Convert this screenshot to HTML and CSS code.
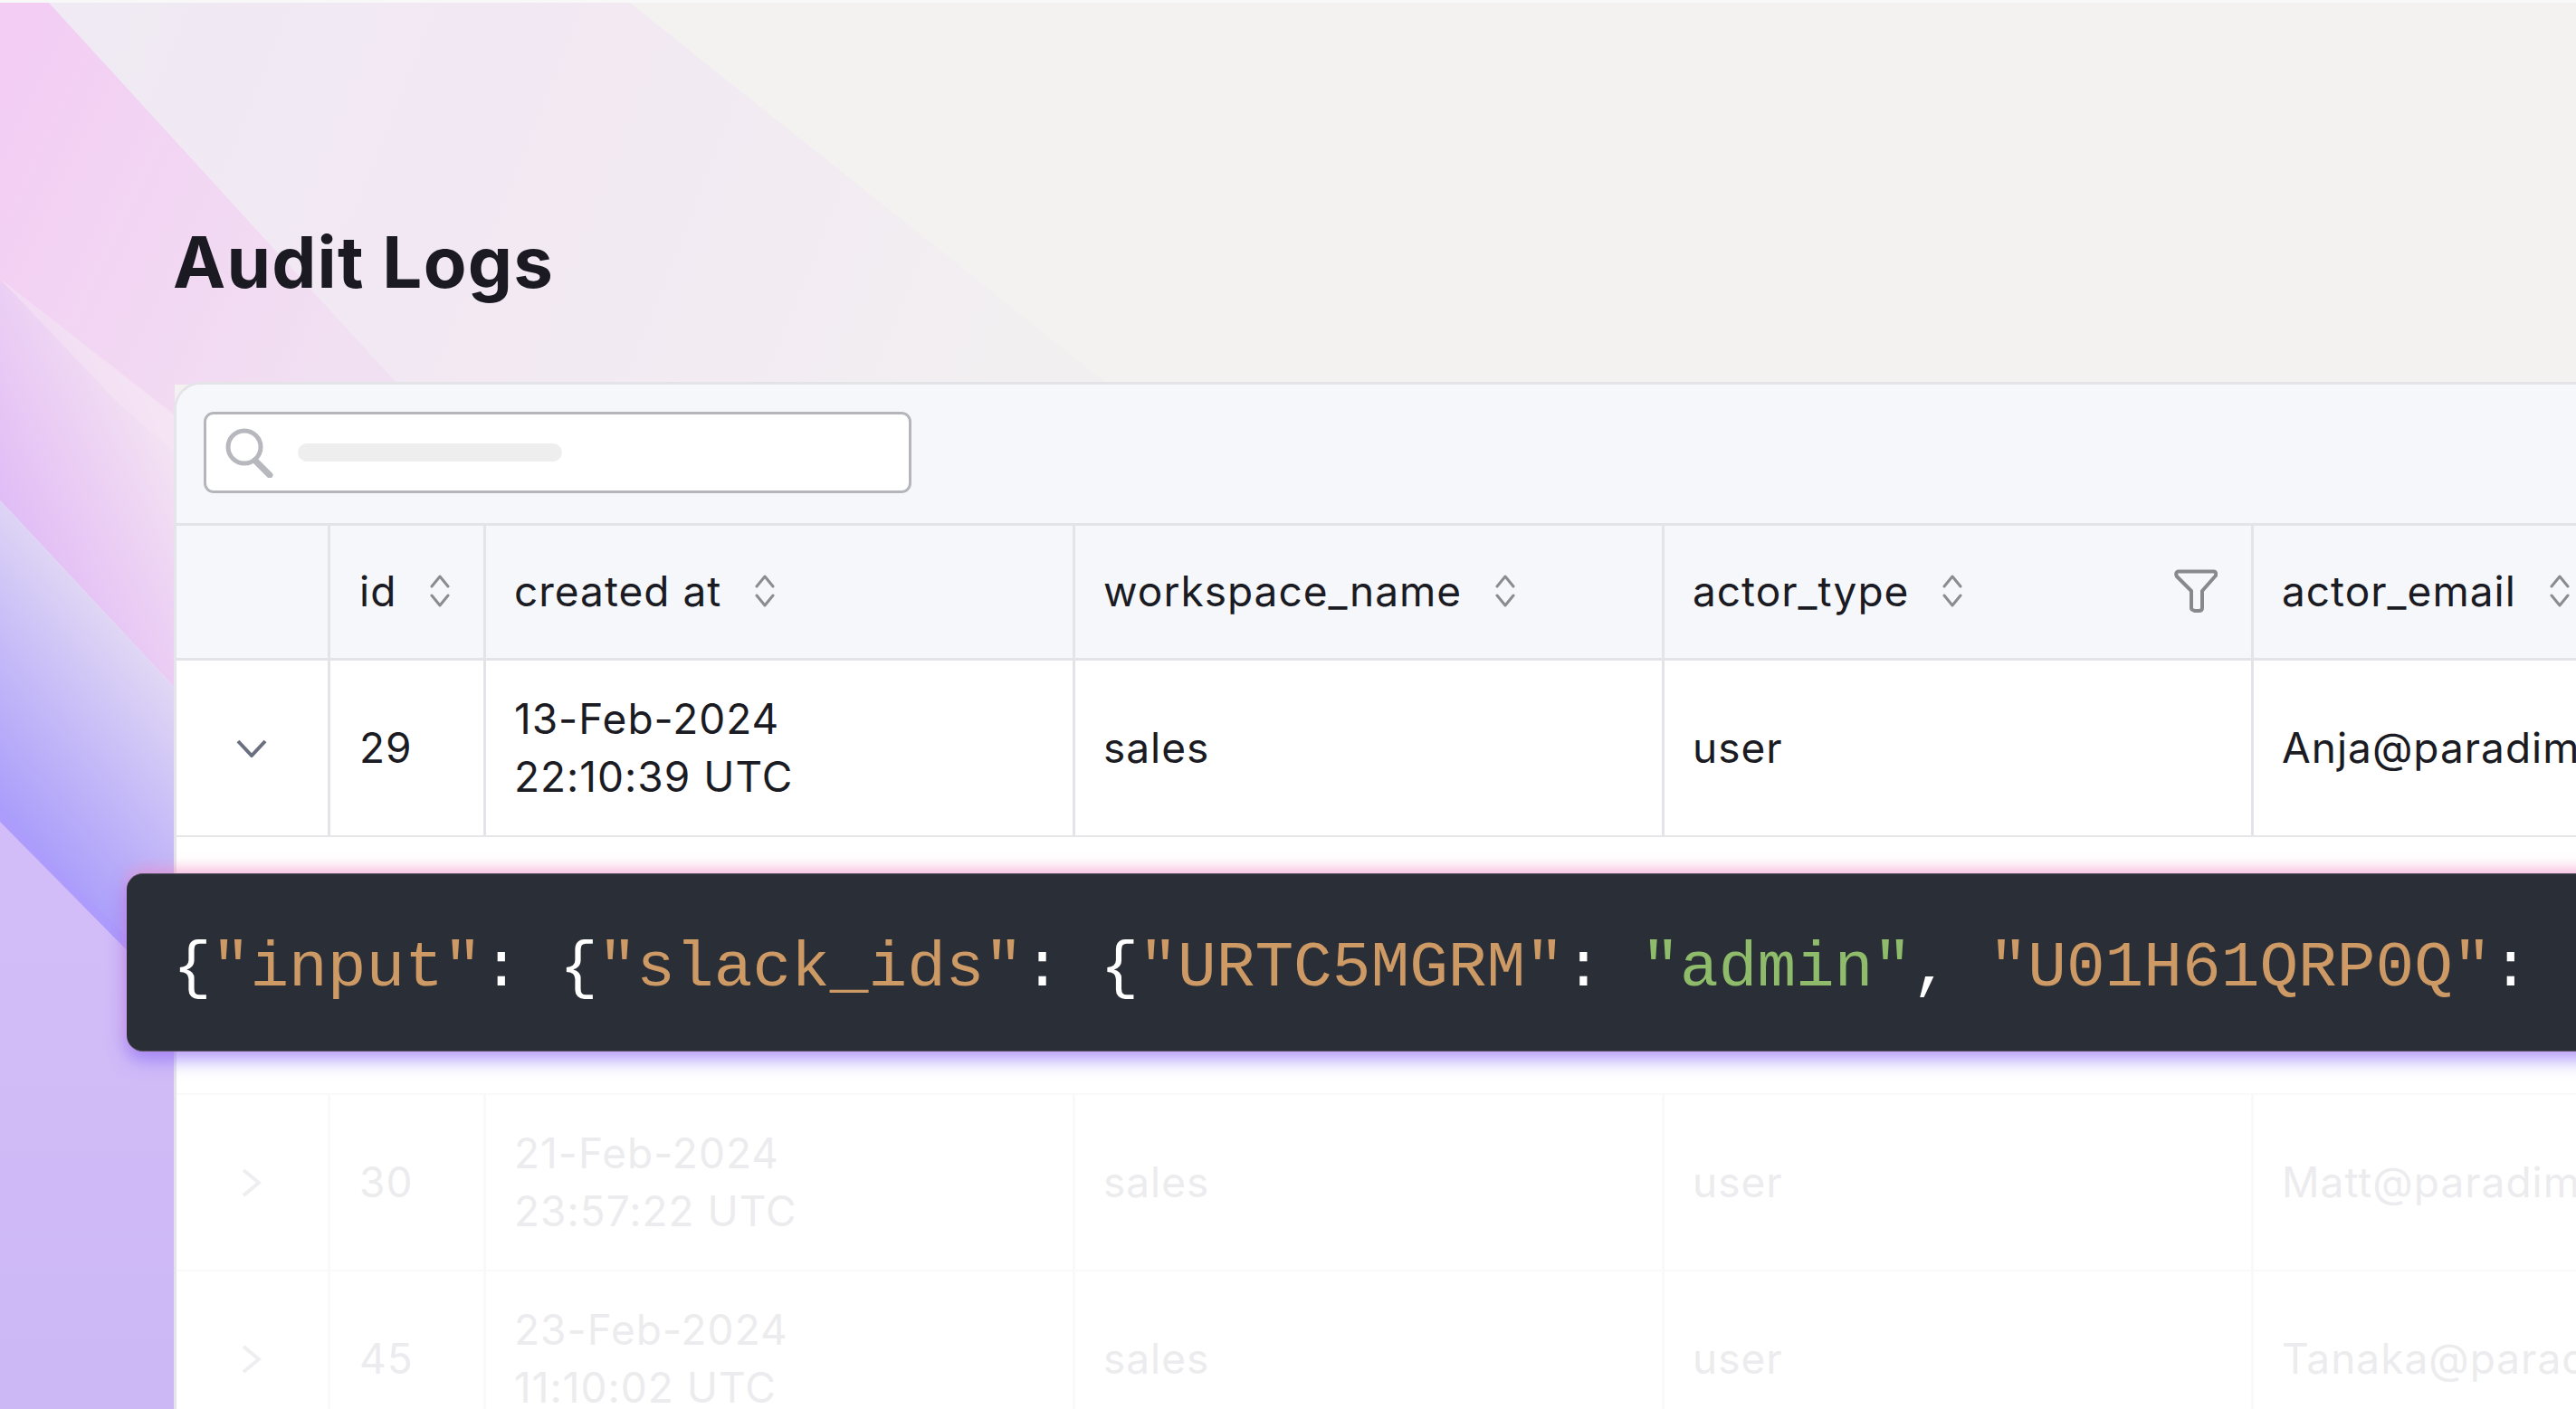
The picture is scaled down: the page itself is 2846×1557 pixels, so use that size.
FILE: index.html
```html
<!DOCTYPE html>
<html lang="en">
<head>
<meta charset="utf-8">
<title>Audit Logs</title>
<link rel="stylesheet" href="styles.css">
</head>
<body>
<svg class="backdrop" viewBox="0 0 2846 1557" preserveAspectRatio="none" aria-hidden="true">
  <defs>
    <linearGradient id="gBand" gradientUnits="userSpaceOnUse" x1="60" y1="0" x2="1100" y2="420">
      <stop offset="0" stop-color="#efeaf3"/>
      <stop offset=".45" stop-color="#f2e8f3"/>
      <stop offset="1" stop-color="#f2eff1"/>
    </linearGradient>
    <linearGradient id="gPink" gradientUnits="userSpaceOnUse" x1="0" y1="100" x2="420" y2="300">
      <stop offset="0" stop-color="#f3cdf4"/>
      <stop offset="1" stop-color="#f1e0f2"/>
    </linearGradient>
    <linearGradient id="gMauve" gradientUnits="userSpaceOnUse" x1="190" y1="470" x2="0" y2="560">
      <stop offset="0" stop-color="#f4e5f3"/>
      <stop offset=".55" stop-color="#ebcdf4"/>
      <stop offset="1" stop-color="#e0bcf6"/>
    </linearGradient>
    <linearGradient id="gBlue" gradientUnits="userSpaceOnUse" x1="190" y1="740" x2="0" y2="900">
      <stop offset="0" stop-color="#e3daf4"/>
      <stop offset="1" stop-color="#a99cfb"/>
    </linearGradient>
    <linearGradient id="gLilac" gradientUnits="userSpaceOnUse" x1="0" y1="1000" x2="0" y2="1557">
      <stop offset="0" stop-color="#d2bdf8"/>
      <stop offset="1" stop-color="#ccb8f5"/>
    </linearGradient>
  </defs>
  <polygon points="54,3 696,3 1225,425 440,425" fill="url(#gBand)"/>
  <polygon points="0,3 54,3 440,425 193,425 193,462 0,312" fill="url(#gPink)"/>
  <polygon points="0,310 193,460 193,760 0,553" fill="url(#gMauve)"/>
  <polygon class="sheen" points="0,308 193,458 193,500 130,445" fill="#f6e6f4"/>
  <polygon points="0,553 193,760 193,1110 0,907" fill="url(#gBlue)"/>
  <polygon points="0,907 150,1058 193,1110 193,1557 0,1557" fill="url(#gLilac)"/>
  <polygon points="0,897 150,1045 150,1060 0,908" fill="#ad9cfc"/>
</svg>

<main class="page">
  <h1 class="title">Audit Logs</h1>

  <section class="card">
    <div class="toolbar">
      <div class="search">
        <svg class="search-icon" viewBox="0 0 56 56" aria-hidden="true">
          <circle cx="22" cy="22" r="18" class="search-ring"/>
          <path d="M34 37 L50 53" class="search-handle"/>
        </svg>
        <span class="search-placeholder"></span>
      </div>
    </div>

    <div class="row head">
      <div class="cell c-toggle"></div>
      <div class="cell c-id"><span>id</span>
        <svg class="sort" viewBox="0 0 22 36" aria-hidden="true"><path d="M2 13 L11 2 L20 13 M2 23 L11 34 L20 23"/></svg>
      </div>
      <div class="cell c-wide"><span>created at</span>
        <svg class="sort" viewBox="0 0 22 36" aria-hidden="true"><path d="M2 13 L11 2 L20 13 M2 23 L11 34 L20 23"/></svg>
      </div>
      <div class="cell c-wide"><span>workspace_name</span>
        <svg class="sort" viewBox="0 0 22 36" aria-hidden="true"><path d="M2 13 L11 2 L20 13 M2 23 L11 34 L20 23"/></svg>
      </div>
      <div class="cell c-wide"><span>actor_type</span>
        <svg class="sort" viewBox="0 0 22 36" aria-hidden="true"><path d="M2 13 L11 2 L20 13 M2 23 L11 34 L20 23"/></svg>
        <svg class="filter" viewBox="0 0 48 48" aria-hidden="true"><path d="M4 2.500 H44 Q47 3 46 7 L31 24 V43 Q31 46 27 46 H23 Q19 45 19 43 V24 L3 8 Q1 4 4 2.500 Z"/></svg>
      </div>
      <div class="cell c-wide"><span>actor_email</span>
        <svg class="sort" viewBox="0 0 22 36" aria-hidden="true"><path d="M2 13 L11 2 L20 13 M2 23 L11 34 L20 23"/></svg>
      </div>
    </div>

    <div class="row body">
      <div class="cell c-toggle">
        <svg class="chev-down" viewBox="0 0 34 20" aria-hidden="true"><path d="M2 2 L17 18 L32 2"/></svg>
      </div>
      <div class="cell c-id">29</div>
      <div class="cell c-wide"><span>13-Feb-2024<br>22:10:39 UTC</span></div>
      <div class="cell c-wide">sales</div>
      <div class="cell c-wide">user</div>
      <div class="cell c-wide">Anja@paradime.io</div>
    </div>

    <div class="row-gap"></div>

    <div class="row body faded">
      <div class="cell c-toggle">
        <svg class="chev-right" viewBox="0 0 22 32" aria-hidden="true"><path d="M2 2 L19 16 L2 30"/></svg>
      </div>
      <div class="cell c-id">30</div>
      <div class="cell c-wide"><span>21-Feb-2024<br>23:57:22 UTC</span></div>
      <div class="cell c-wide">sales</div>
      <div class="cell c-wide">user</div>
      <div class="cell c-wide">Matt@paradime.io</div>
    </div>

    <div class="row body faded">
      <div class="cell c-toggle">
        <svg class="chev-right" viewBox="0 0 22 32" aria-hidden="true"><path d="M2 2 L19 16 L2 30"/></svg>
      </div>
      <div class="cell c-id">45</div>
      <div class="cell c-wide"><span>23-Feb-2024<br>11:10:02 UTC</span></div>
      <div class="cell c-wide">sales</div>
      <div class="cell c-wide">user</div>
      <div class="cell c-wide">Tanaka@paradime.io</div>
    </div>

    <div class="code-bar"><code class="code"><span class="p">{</span><span class="k">"input"</span><span class="p">: {</span><span class="k">"slack_ids"</span><span class="p">: {</span><span class="k">"URTC5MGRM"</span><span class="p">: </span><span class="v">"admin"</span><span class="p">, </span><span class="k">"U01H61QRP0Q"</span><span class="p">: </span></code></div>
  </section>
</main>
</body>
</html>
```
FILE: styles.css
```css
* { box-sizing: border-box; }
html, body { margin: 0; height: 100%; }
body {
  position: relative;
  overflow: hidden;
  background: #f3f2f0;
  border-top: 3px solid #f8f8f8;
  font-family: Inter, "Liberation Sans", sans-serif;
  color: #1b1b23;
}
.backdrop {
  position: absolute;
  left: 0;
  top: -3px;
  width: 2846px;
  height: 1557px;
}
.sheen { opacity: .55; }
.page {
  position: relative;
  padding: 237px 0 0 192px;
}
.title {
  margin: 0 0 0 -1px;
  height: 182px;
  font-size: 78px;
  line-height: 100px;
  font-weight: 650;
  letter-spacing: 1.200px;
  color: #1b1a22;
}
.card {
  position: relative;
  width: 2900px;
  background: #fff;
  border-top: 3px solid #e3e3e8;
  border-left: 3px solid #e4e4ea;
  border-top-left-radius: 30px;
}
.toolbar {
  height: 153px;
  padding: 30px 0 0 30px;
  background: #f6f7fb;
  border-top-left-radius: 27px;
}
.search {
  width: 782px;
  height: 90px;
  display: flex;
  align-items: center;
  padding-left: 20px;
  background: #fff;
  border: 3px solid #b5b6bc;
  border-radius: 11px;
}
.search-icon { width: 56px; height: 56px; flex: none; }
.search-ring { fill: none; stroke: #b7b7be; stroke-width: 5; }
.search-handle { fill: none; stroke: #b7b7be; stroke-width: 7; stroke-linecap: round; }
.search-placeholder {
  width: 292px;
  height: 20px;
  margin-left: 25px;
  background: #eeeeee;
  border-radius: 10px;
}
.row { display: flex; font-size: 46px; line-height: 64px; letter-spacing: 1px; }
.head {
  height: 152px;
  background: #f6f7fb;
  border-top: 3px solid #e3e3e8;
  border-bottom: 3px solid #e3e3e8;
}
.body { height: 195px; border-bottom: 2px solid #e6e6e9; }
.row-gap { height: 285px; border-bottom: 2px solid #f9f9fa; }
.cell {
  flex: none;
  display: flex;
  align-items: center;
  padding: 0 0 2px 31px;
  border-right: 3px solid #e3e3e8;
}
.c-toggle { width: 170px; padding: 0 2px 0 0; justify-content: center; }
.c-id { width: 172px; padding-left: 32px; }
.c-wide { width: 651px; }
.c-wide:last-child { border-right: 0; }
.sort {
  width: 22px;
  height: 36px;
  margin-left: 37px;
  flex: none;
  fill: none;
  stroke: #8b8b90;
  stroke-width: 3;
  stroke-linecap: round;
  stroke-linejoin: round;
}
.filter {
  width: 48px;
  height: 48px;
  margin-left: auto;
  margin-right: 37px;
  fill: none;
  stroke: #88898d;
  stroke-width: 4;
  stroke-linejoin: round;
}
.chev-down {
  width: 34px;
  height: 20px;
  fill: none;
  stroke: #6b7080;
  stroke-width: 4;
}
.chev-right {
  width: 22px;
  height: 32px;
  fill: none;
  stroke: #eeeef0;
  stroke-width: 4;
}
.faded { color: #ececee; border-bottom-color: #f9f9fa; }
.faded .cell { border-right-color: #f9f9fa; }
.code-bar {
  position: absolute;
  left: -55px;
  top: 540px;
  width: 2900px;
  height: 197px;
  display: flex;
  align-items: center;
  padding: 13px 0 0 51px;
  background: #2a2e36;
  border-top: 1px solid #5d5468;
  border-bottom: 1px solid #5d5468;
  border-radius: 18px 0 0 18px;
  box-shadow: 0 -6px 15px rgba(255, 145, 190, .5), 0 9px 20px rgba(125, 95, 250, .62);
}
.code {
  font-family: "Liberation Mono", "DejaVu Sans Mono", monospace;
  font-size: 71.150px;
  white-space: pre;
}
.p { color: #fff; }
.k { color: #cd9a66; }
.v { color: #8fbc6b; }
```
